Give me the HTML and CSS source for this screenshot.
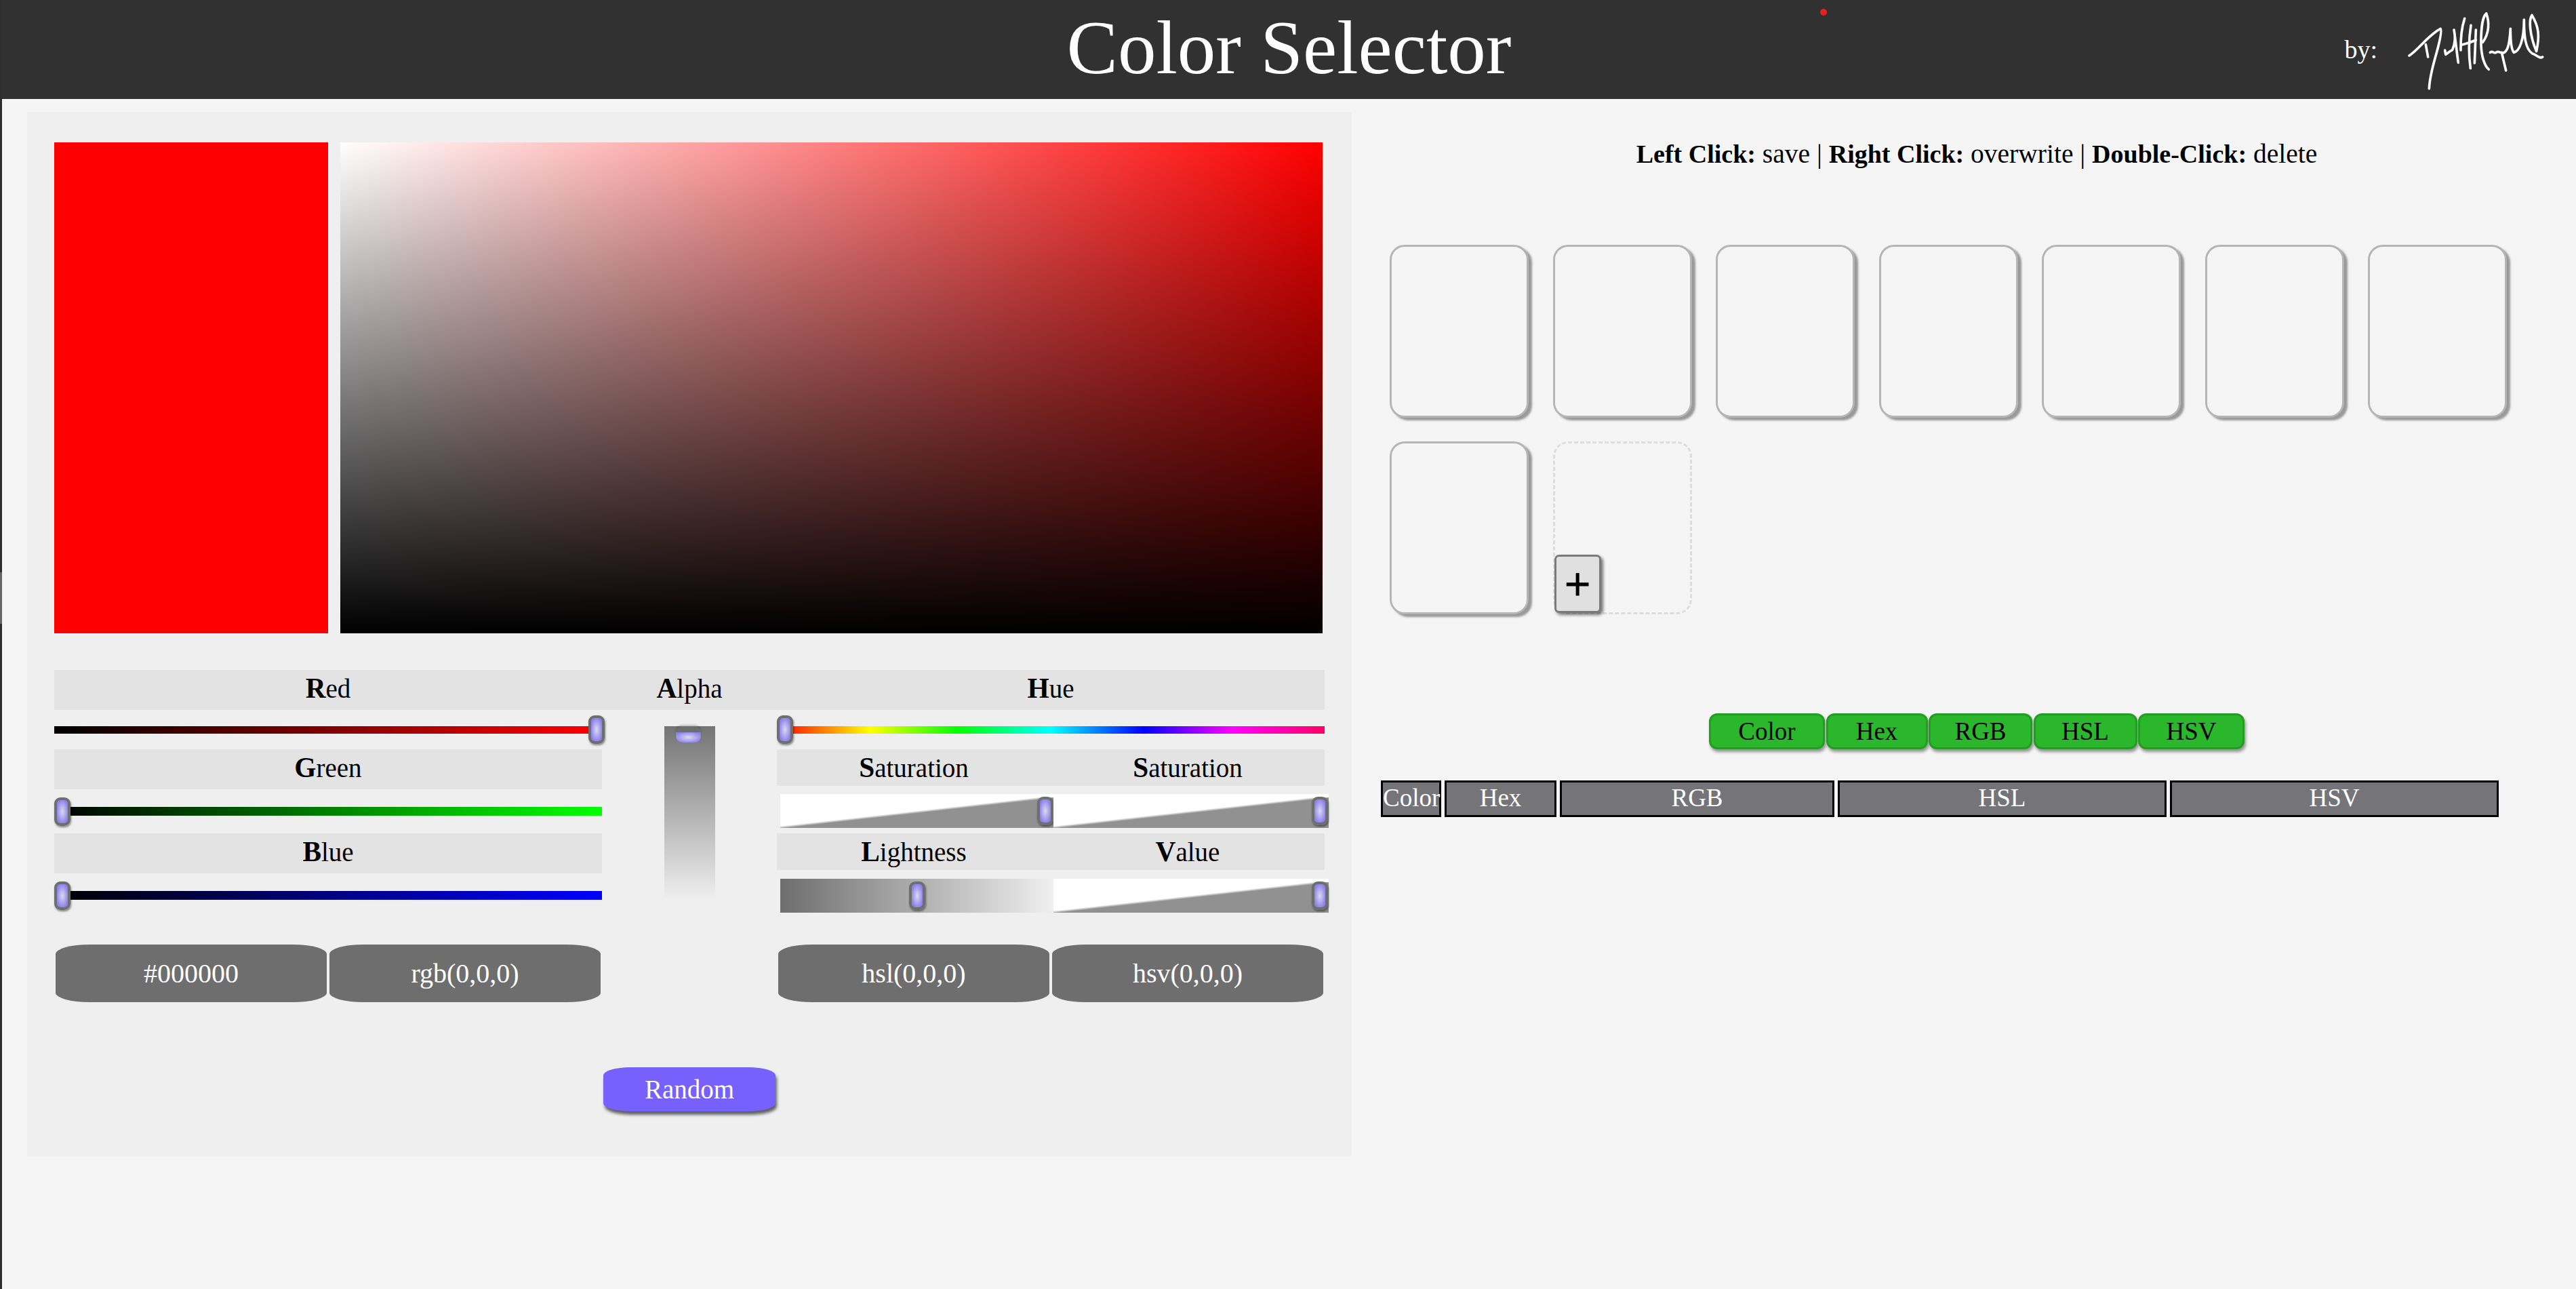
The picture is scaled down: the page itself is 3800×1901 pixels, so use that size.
FILE: index.html
```html
<!DOCTYPE html>
<html lang="en">
<head>
	<meta charset="UTF-8">
	<title>Color Selector</title>
	<link rel="stylesheet" href="styles.css">
</head>

<body>

<header class="top">
	<span></span>
	<h1>Color Selector</h1>
	<div class="byline">
		<span>by:</span>
		<svg class="signature" viewBox="0 0 690 390" width="230" height="130" fill="none" stroke="#fff" stroke-width="11" stroke-linecap="round" stroke-linejoin="round">
			<path d="M27 219C65 195 110 130 165 100C172 105 165 140 155 180C140 240 118 300 115 365"/>
			<path d="M100 170L110 225"/>
			<path d="M185 195L188 214C198 208 205 200 218 194C228 170 232 135 225 105C232 150 238 210 244 250"/>
			<path d="M272 55C262 85 254 130 255 195"/>
			<path d="M300 85C290 150 290 220 298 275"/>
			<path d="M258 172C280 166 300 160 322 150"/>
			<path d="M322 105L316 252"/>
			<path d="M368 33C352 45 344 100 345 170C346 220 360 265 379 280"/>
			<path d="M368 33C382 70 382 120 352 160"/>
			<path d="M385 205C395 195 402 212 412 205C420 196 426 208 436 205L455 285"/>
			<path d="M440 208C460 205 470 180 475 100C475 150 480 195 490 205C515 200 535 150 535 60C535 130 540 190 572 210C590 215 605 235 617 225"/>
			<path d="M570 40C555 60 560 130 590 200C605 130 600 90 570 40"/>
		</svg>
	</div>
	<i class="dot"></i>
</header>
<i class="edge-mark"></i>

<main class="page">

	<section class="picker">
		<div class="preview">
			<div class="swatch"></div>
			<div class="sv-field"></div>
		</div>

		<div class="sliders">
			<div class="col">
				<div class="label tall"><b>R</b>ed</div>
				<div class="slot short">
					<div class="track red end"><i class="thumb"></i></div>
				</div>
				<div class="label tall"><b>G</b>reen</div>
				<div class="slot">
					<div class="track green"><i class="thumb"></i></div>
				</div>
				<div class="label tall"><b>B</b>lue</div>
				<div class="slot">
					<div class="track blue"><i class="thumb"></i></div>
				</div>
				<div class="values">
					<div class="value">#000000</div>
					<div class="value">rgb(0,0,0)</div>
				</div>
			</div>

			<div class="col">
				<div class="label tall"><b>A</b>lpha</div>
				<div class="alpha"><i class="alpha-thumb"></i></div>
			</div>

			<div class="col">
				<div class="label tall"><b>H</b>ue</div>
				<div class="slot short">
					<div class="track hue"><i class="thumb"></i></div>
				</div>
				<div class="pair">
					<div class="label"><b>S</b>aturation</div>
					<div class="label"><b>S</b>aturation</div>
				</div>
				<div class="strips">
					<div class="strip wedge end"><i class="thumb"></i></div>
					<div class="strip wedge end"><i class="thumb"></i></div>
				</div>
				<div class="pair">
					<div class="label"><b>L</b>ightness</div>
					<div class="label"><b>V</b>alue</div>
				</div>
				<div class="strips">
					<div class="strip light"><i class="thumb"></i></div>
					<div class="strip wedge end"><i class="thumb"></i></div>
				</div>
				<div class="values lower">
					<div class="value">hsl(0,0,0)</div>
					<div class="value">hsv(0,0,0)</div>
				</div>
			</div>
		</div>

		<button class="random">Random</button>
	</section>

	<section class="saved">
		<p class="help"><b>Left Click:</b> save | <b>Right Click:</b> overwrite | <b>Double-Click:</b> delete</p>

		<div class="cards">
			<div class="card"></div>
			<div class="card"></div>
			<div class="card"></div>
			<div class="card"></div>
			<div class="card"></div>
			<div class="card"></div>
			<div class="card"></div>
			<div class="card"></div>
			<div class="add-card"><button class="add">+</button></div>
		</div>

		<div class="formats">
			<button>Color</button>
			<button>Hex</button>
			<button>RGB</button>
			<button>HSL</button>
			<button>HSV</button>
		</div>

		<div class="heads">
			<div>Color</div>
			<div>Hex</div>
			<div>RGB</div>
			<div>HSL</div>
			<div>HSV</div>
		</div>
	</section>

</main>

</body>
</html>
```

FILE: styles.css
```css
* {
	box-sizing: border-box;
}

body {
	margin: 0;
	min-height: 100vh;
	border-left: 3px solid #2f2f2f;
	background: #f5f5f5;
	color: #000;
	font-family: "Liberation Serif", serif;
	font-size: 39px;
}

button {
	font-family: inherit;
	cursor: pointer;
}

b {
	font-size: 1.06em;
}

/* header */

.top {
	position: relative;
	display: grid;
	grid-template-columns: 1fr auto 1fr;
	align-items: center;
	height: 146px;
	margin-left: -3px;
	padding-left: 3px;
	background: #313131;
	color: #fff;
}

.top h1 {
	margin: -6px 0 0;
	font-size: 113px;
	font-weight: 400;
	line-height: 140px;
}

.byline {
	display: flex;
	align-items: center;
	justify-content: flex-end;
	gap: 38px;
	padding-right: 25px;
	font-size: 38px;
}

.signature {
	margin-top: 2px;
}

.dot {
	position: absolute;
	left: 2685px;
	top: 13px;
	width: 10px;
	height: 10px;
	border-radius: 50%;
	background: #e8201c;
}

.edge-mark {
	position: absolute;
	left: 0;
	top: 844px;
	width: 3px;
	height: 76px;
	background: #666;
}

/* page */

.page {
	display: flex;
	align-items: flex-start;
}

.picker {
	width: 1954px;
	margin: 19px 0 0 37px;
	padding: 45px 40px 66px;
	background: #efefef;
}

.preview {
	display: flex;
	gap: 18px;
	height: 724px;
	padding-right: 3px;
}

.swatch {
	width: 404px;
	background: #f00;
}

.sv-field {
	flex: 1;
	background:
		linear-gradient(to bottom, rgba(0, 0, 0, 0), #000),
		linear-gradient(to right, #fff, #f00);
}

.sliders {
	display: grid;
	grid-template-columns: 808px 258px 808px;
	margin-top: 54px;
}

.col {
	display: flex;
	flex-direction: column;
}

.label {
	height: 54px;
	padding-top: 2px;
	background: #e3e3e3;
	line-height: 50px;
	text-align: center;
}

.label.tall {
	height: 59px;
}

.slot {
	display: flex;
	align-items: center;
	height: 65px;
}

.slot.short {
	height: 58px;
}

.track {
	display: flex;
	align-items: center;
	width: 100%;
	height: 13px;
}

.slot.short .track {
	height: 11px;
}

.end {
	justify-content: flex-end;
}

.red {
	background: linear-gradient(to right, #000, #f00);
}

.red .thumb {
	margin-right: -4px;
}

.green {
	background: linear-gradient(to right, #000, #0f0);
}

.blue {
	background: linear-gradient(to right, #000, #00f);
}

.hue {
	background: linear-gradient(to right, #f00, #ff0 17%, #0f0 33%, #0ff 50%, #00f 67%, #f0f 83%, #f06);
}

.thumb {
	flex-shrink: 0;
	width: 24px;
	height: 42px;
	border: 4px solid #6e6e6e;
	border-radius: 9px;
	background: radial-gradient(ellipse at center, #ddd9ee 0, #8e82ea 75%);
	box-shadow: 1px 2px 3px rgba(0, 0, 0, .45);
}

.pair {
	display: grid;
	grid-template-columns: 1fr 1fr;
}

.strips {
	display: grid;
	grid-template-columns: 403px 406px;
	margin: 12px -6px 8px 5px;
}

.strips + .pair + .strips {
	margin: 13px -6px 0 5px;
}

.strip {
	display: flex;
	align-items: center;
	height: 50px;
}

.wedge {
	background: #fff linear-gradient(to bottom right, #fff 47%, #919191 51%) bottom / 100% 90% no-repeat;
}

.wedge:last-child .thumb {
	margin-right: 1px;
}

.light {
	justify-content: center;
	background: linear-gradient(to right, #6e6e6e, #efefef);
}

.values {
	display: grid;
	grid-template-columns: 400px 400px;
	gap: 4px;
	margin-top: 40px;
	padding-left: 2px;
}

.values.lower {
	margin-top: 47px;
}

.value {
	height: 85px;
	border-radius: 50px / 14px;
	background: #6e6e6e;
	color: #fff;
	font-size: 40px;
	line-height: 85px;
	text-align: center;
}

.alpha {
	display: flex;
	justify-content: center;
	align-self: center;
	width: 75px;
	height: 256px;
	margin-top: 24px;
	background: linear-gradient(to bottom, #747474, #efefef);
}

.alpha-thumb {
	width: 37px;
	height: 24px;
	margin-right: 4px;
	border-top: 9px solid #6e6e6e;
	border-radius: 9px;
	background: radial-gradient(ellipse at center, #ddd9ee 0, #8e82ea 80%);
	box-shadow: 0 -2px 3px rgba(0, 0, 0, .2);
}

.random {
	display: block;
	width: 254px;
	height: 65px;
	margin: 96px auto 0;
	border: 0;
	border-radius: 40px / 12px;
	background: #7760fb;
	color: #fff;
	font-size: 39px;
	box-shadow: 2px 5px 4px rgba(0, 0, 0, .6);
}

/* saved colors */

.saved {
	width: 1768px;
	margin-left: 38px;
	padding-top: 56px;
}

.help {
	margin: 0;
	font-size: 39.5px;
	line-height: 50px;
	text-align: center;
}

.help b {
	font-size: 38px;
}

.cards {
	display: grid;
	grid-template-columns: repeat(7, 205px);
	grid-auto-rows: 255px;
	gap: 35px 35.5px;
	margin: 109px 0 0 18px;
}

.card {
	width: 205px;
	border: 3px solid #b5b5b5;
	border-radius: 22px;
	background: #f5f5f5;
	box-shadow: 5px 4px 3px #999;
}

.add-card {
	display: flex;
	align-items: flex-end;
	border: 3px dashed #ddd;
	border-radius: 22px;
}

.add {
	width: 69px;
	height: 86px;
	margin: 0 0 -1px -1px;
	padding: 0;
	border: 3px solid #7a7a7a;
	border-radius: 7px;
	background: #e0e0e0;
	color: #000;
	font-family: "DejaVu Sans", sans-serif;
	font-size: 51px;
	line-height: 80px;
	-webkit-text-stroke: .8px #000;
	box-shadow: 3px 3px 4px rgba(0, 0, 0, .5);
}

.formats {
	display: grid;
	grid-template-columns: 171px 150px 153px 153px 157px;
	justify-content: center;
	gap: 1.5px;
	margin-top: 146px;
}

.formats button {
	height: 53px;
	padding: 0;
	border: 3px solid #229f22;
	border-radius: 12px;
	background: #2bb72b;
	color: #000;
	font-size: 37px;
	line-height: 47px;
	box-shadow: 2px 4px 4px rgba(0, 0, 0, .4);
}

.heads {
	display: grid;
	grid-template-columns: 89px 165px 405px 485px 485px;
	gap: 5px;
	margin: 46px 0 0 5px;
	color: #fff;
	font-size: 37px;
	text-align: center;
}

.heads div {
	height: 54px;
	border: 3px solid #000;
	background: #747479;
	line-height: 46px;
}
```
